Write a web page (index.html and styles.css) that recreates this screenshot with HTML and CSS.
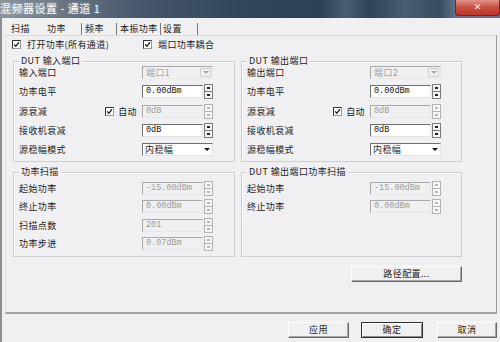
FILE: index.html
```html
<!DOCTYPE html>
<html lang="zh">
<head>
<meta charset="utf-8">
<title>混频器设置</title>
<link rel="stylesheet" href="styles.css">
</head>
<body>
<div class="titlebar">
  <span class="title">混频器设置 - 通道 1</span>
  <span class="close">✕</span>
</div>
<div class="dialog">
  <div class="tabs">
    <span class="tab t1">扫描</span>
    <span class="tab t2">功率</span>
    <span class="tab t3">频率</span>
    <span class="tab t4">本振功率</span>
    <span class="tab t5">设置</span>
  </div>
  <div class="page">
    <div class="checks">
      <span class="chk c1"><svg class="cb" width="9" height="9" viewBox="0 0 9 9"><rect x="0.5" y="0.5" width="8" height="8" fill="#fff" stroke="#9a9a9a"/><path d="M0.5 8.5V0.5H8.5" fill="none" stroke="#333"/><path d="M2.2 4.4l1.6 1.9L6.9 2.4" fill="none" stroke="#111" stroke-width="1.3"/></svg>打开功率(所有通道)</span>
      <span class="chk"><svg class="cb" width="9" height="9" viewBox="0 0 9 9"><rect x="0.5" y="0.5" width="8" height="8" fill="#fff" stroke="#9a9a9a"/><path d="M0.5 8.5V0.5H8.5" fill="none" stroke="#333"/><path d="M2.2 4.4l1.6 1.9L6.9 2.4" fill="none" stroke="#111" stroke-width="1.3"/></svg>端口功率耦合</span>
    </div>
    <div class="groups">
      <div class="grp grp1">
        <div class="gtitle">DUT 输入端口</div>
        <div class="row"><span class="lbl">输入端口</span><span class="combo dis"><span class="ctext">端口1</span><span class="carrow"></span></span></div>
        <div class="row"><span class="lbl">功率电平</span><span class="edit val">0.00dBm</span><span class="spin"><span class="up"></span><span class="dn"></span></span></div>
        <div class="row"><span class="lbl">源衰减<span class="auto"><svg class="cb" width="9" height="9" viewBox="0 0 9 9"><rect x="0.5" y="0.5" width="8" height="8" fill="#fff" stroke="#9a9a9a"/><path d="M0.5 8.5V0.5H8.5" fill="none" stroke="#333"/><path d="M2.2 4.4l1.6 1.9L6.9 2.4" fill="none" stroke="#111" stroke-width="1.3"/></svg>自动</span></span><span class="edit val dis">0dB</span><span class="spin dis"><span class="up"></span><span class="dn"></span></span></div>
        <div class="row"><span class="lbl">接收机衰减</span><span class="edit val">0dB</span><span class="spin"><span class="up"></span><span class="dn"></span></span></div>
        <div class="row"><span class="lbl">源稳幅模式</span><span class="combo"><span class="ctext">内稳幅</span><span class="carrow"></span></span></div>
      </div>
      <div class="grp grp1">
        <div class="gtitle">DUT 输出端口</div>
        <div class="row"><span class="lbl">输出端口</span><span class="combo dis"><span class="ctext">端口2</span><span class="carrow"></span></span></div>
        <div class="row"><span class="lbl">功率电平</span><span class="edit val">0.00dBm</span><span class="spin"><span class="up"></span><span class="dn"></span></span></div>
        <div class="row"><span class="lbl">源衰减<span class="auto"><svg class="cb" width="9" height="9" viewBox="0 0 9 9"><rect x="0.5" y="0.5" width="8" height="8" fill="#fff" stroke="#9a9a9a"/><path d="M0.5 8.5V0.5H8.5" fill="none" stroke="#333"/><path d="M2.2 4.4l1.6 1.9L6.9 2.4" fill="none" stroke="#111" stroke-width="1.3"/></svg>自动</span></span><span class="edit val dis">0dB</span><span class="spin dis"><span class="up"></span><span class="dn"></span></span></div>
        <div class="row"><span class="lbl">接收机衰减</span><span class="edit val">0dB</span><span class="spin"><span class="up"></span><span class="dn"></span></span></div>
        <div class="row"><span class="lbl">源稳幅模式</span><span class="combo"><span class="ctext">内稳幅</span><span class="carrow"></span></span></div>
      </div>
      <div class="grp grp2">
        <div class="gtitle">功率扫描</div>
        <div class="row"><span class="lbl">起始功率</span><span class="edit val dis">-15.00dBm</span><span class="spin dis"><span class="up"></span><span class="dn"></span></span></div>
        <div class="row"><span class="lbl">终止功率</span><span class="edit val dis">0.00dBm</span><span class="spin dis"><span class="up"></span><span class="dn"></span></span></div>
        <div class="row"><span class="lbl">扫描点数</span><span class="edit val dis">201</span><span class="spin dis"><span class="up"></span><span class="dn"></span></span></div>
        <div class="row"><span class="lbl">功率步进</span><span class="edit val dis">0.07dBm</span><span class="spin dis"><span class="up"></span><span class="dn"></span></span></div>
      </div>
      <div class="grp grp2">
        <div class="gtitle">DUT 输出端口功率扫描</div>
        <div class="row"><span class="lbl">起始功率</span><span class="edit val dis">-15.00dBm</span><span class="spin dis"><span class="up"></span><span class="dn"></span></span></div>
        <div class="row"><span class="lbl">终止功率</span><span class="edit val dis">0.00dBm</span><span class="spin dis"><span class="up"></span><span class="dn"></span></span></div>
      </div>
    </div>
    <div class="pathrow"><span class="btn path">路径配置...</span></div>
  </div>
  <div class="buttons">
    <span class="btn b-apply">应用</span>
    <span class="btn b-ok">确定</span>
    <span class="btn b-cancel">取消</span>
  </div>
</div>
</body>
</html>
```
FILE: styles.css
```css
* { box-sizing: border-box; }
html, body { margin: 0; padding: 0; }
body {
  width: 500px; height: 342px; overflow: hidden;
  background: #f0f0f0;
  font-family: "Noto Sans CJK SC", "Noto Sans", sans-serif;
  font-size: 9px; letter-spacing: 0.4px; color: #1c1c1c;
}
.titlebar {
  height: 18px; display: flex; justify-content: space-between; align-items: flex-start;
  background: linear-gradient(90deg, #8a939b 0, #66727e 70px, #44546a 150px, #33465d 240px, #2c3f57 320px, #4a5d72 345px, #30435b 370px, #485c72 405px, #364a61 440px, #5f7286 455px);
}
.title { font-size: 11px; line-height: 17px; color: #f6f7f9; letter-spacing: 0.5px; white-space: nowrap; text-shadow: 0 0 3px rgba(220,230,240,0.6); }
.close {
  width: 45px; height: 16px; margin-right: 0;
  background: linear-gradient(#e29488, #cd5246 45%, #b8362b);
  border: 1px solid #6c2a24; border-top: none; border-radius: 0 0 4px 4px;
  color: #fff; font: bold 9px/15px "DejaVu Sans", sans-serif; text-align: center; letter-spacing: 0;
}
.dialog { height: 324px; border-left: 2px solid #8e8e8e; padding-left: 3px; display: flex; flex-direction: column; }
.tabs { height: 17px; display: flex; align-items: flex-end; }
.tab { height: 12px; line-height: 11px; white-space: nowrap; }
.t1 { width: 35px; padding-left: 6px; }
.t2 { width: 41px; padding-left: 7px; }
.t3 { width: 35px; padding-left: 3px; border-left: 1px solid #7a7a7a; }
.t4 { width: 44px; padding-left: 3px; border-left: 1px solid #7a7a7a; }
.t5 { width: 38px; padding-left: 2px; border-left: 1px solid #7a7a7a; border-right: 1px solid #7a7a7a; }
.page {
  width: 492px; height: 279px;
  border-top: 1px solid #dadada; border-left: 1px solid #e2e2e2;
  border-right: 1px solid #9a9a9a; border-bottom: 2px solid #a3a3a3;
  padding-left: 6px;
  background: #f0f0f2;
}
.checks { height: 16px; display: flex; align-items: center; }
.chk { display: flex; align-items: center; gap: 6px; white-space: nowrap; }
.c1 { width: 131px; }
.cb { flex: none; display: block; }
.groups { margin: 9px 0 0 1px; display: grid; grid-template-columns: 222px 221px; grid-template-rows: 101px 85px; column-gap: 6px; row-gap: 10px; }
.grp { border: 1px solid #cfcfcf; box-shadow: inset 1px 1px 0 #fff; }
.gtitle { width: fit-content; margin: -6px 0 -3px 5px; padding: 0 2px; line-height: 10px; background: #f0f0f2; white-space: nowrap; }
.grp2 .gtitle { margin-bottom: 2px; }
.row { display: flex; align-items: center; height: 19.25px; padding-left: 5px; }
.grp2 .row { height: 18.5px; }
.lbl { width: 123px; flex: none; display: flex; justify-content: space-between; align-items: center; white-space: nowrap; }
.auto { display: flex; align-items: center; gap: 4px; margin-right: 5px; }
.edit {
  width: 61px; height: 13px; flex: none;
  border: 1px solid; border-color: #6f6f6f #e4e4e4 #e4e4e4 #6f6f6f;
  background: #fff; padding-left: 3px; line-height: 11px;
}
.val { font-family: "Liberation Mono", monospace; font-size: 8.5px; letter-spacing: 0; color: #111; }
.edit.dis { background: #f0f0f2; border-color: #a9a9a9 #e8e8e8 #e8e8e8 #a9a9a9; color: #9d9d9d; }
.spin { width: 9px; height: 15px; margin-left: 1px; flex: none; display: flex; flex-direction: column; border: 1px solid #7c7c7c; background: #f6f6f6; }
.spin span { flex: 1; display: flex; align-items: center; justify-content: center; }
.spin .up { border-bottom: 1px solid #7c7c7c; }
.spin .up::after, .spin .dn::after { content: ""; width: 3px; height: 2px; background: #222; }
.spin.dis { border-color: #b3b3b3; }
.spin.dis .up { border-bottom-color: #b3b3b3; }
.spin.dis .up::after, .spin.dis .dn::after { background: #b8b8b8; }
.combo {
  width: 71px; height: 13px; flex: none; display: flex;
  border: 1px solid; border-color: #6f6f6f #e4e4e4 #e4e4e4 #6f6f6f; background: #fff;
}
.ctext { flex: 1; padding-left: 2px; line-height: 11px; white-space: nowrap; }
.carrow { width: 11px; display: flex; align-items: center; justify-content: center; }
.carrow::after { content: ""; border-left: 3px solid transparent; border-right: 3px solid transparent; border-top: 3px solid #111; }
.combo.dis { background: #f0f0f2; border-color: #a9a9a9 #e8e8e8 #e8e8e8 #a9a9a9; }
.combo.dis .ctext { color: #a3a3a3; padding-left: 3px; }
.combo.dis .carrow { border: 1px solid #d0d0d0; margin: 1px; }
.combo.dis .carrow::after { border-top-color: #a8a8a8; }
.pathrow { display: flex; justify-content: flex-end; margin: 9px 34px 0 0; }
.btn {
  height: 16px; display: block; text-align: center; line-height: 14px; white-space: nowrap;
  border: 1px solid; border-color: #ffffff #696969 #696969 #ffffff;
  box-shadow: inset -1px -1px 0 #a6a6a6;
  background: #f0f0f0;
}
.path { width: 111px; }
.buttons { display: flex; justify-content: flex-end; margin-top: 8px; padding-right: 3px; }
.b-apply { width: 61px; }
.b-ok { width: 62px; margin-left: 12px; border-color: #2e2e2e; box-shadow: inset 1px 1px 0 #fff, inset -1px -1px 0 #8a8a8a; }
.b-cancel { width: 60px; margin-left: 14px; }
```
